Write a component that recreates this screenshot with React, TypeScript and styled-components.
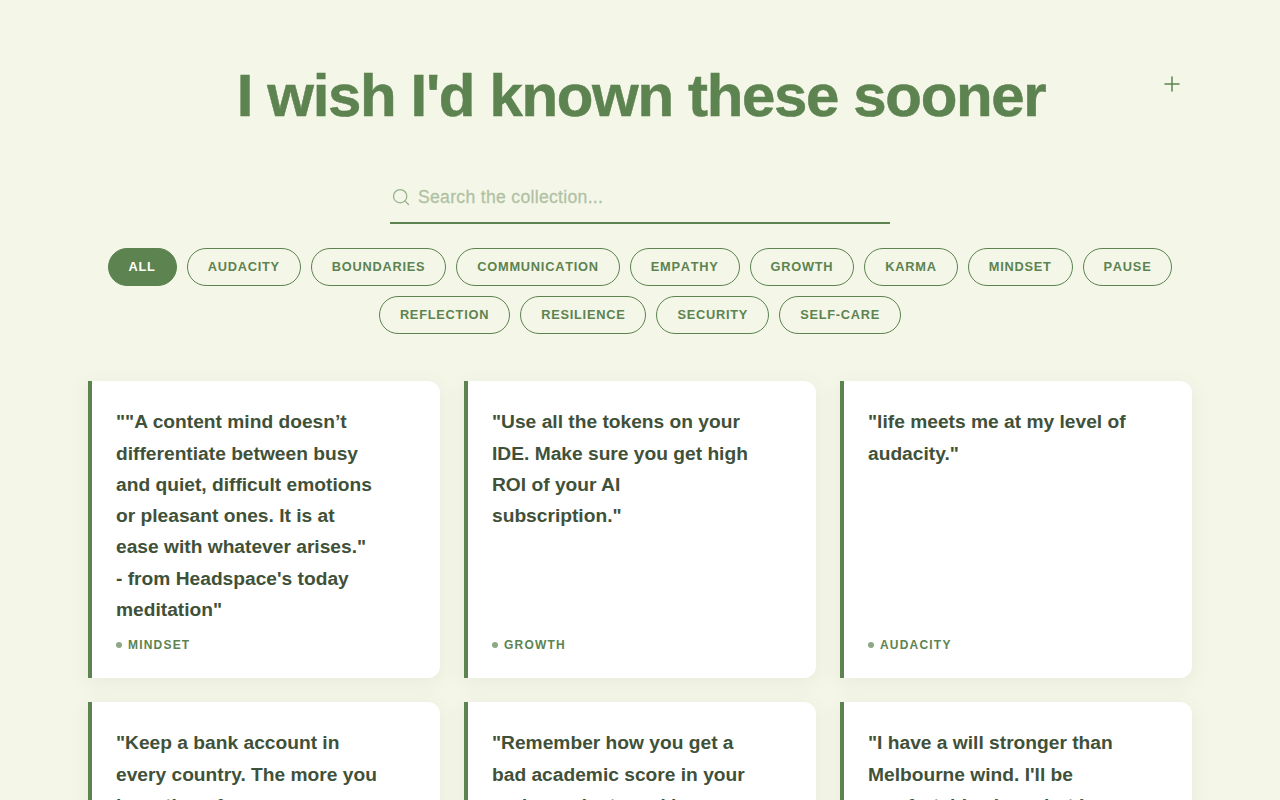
import React from 'react';
import styled, { createGlobalStyle } from 'styled-components';
import { Plus, Search } from 'lucide-react';

const GlobalStyle = createGlobalStyle`
  html, body {
    margin: 0;
    height: 100%;
    overflow: hidden;
    background: #f4f6e8;
  }

  body {
    font-family: "Liberation Sans", Arial, sans-serif;
    -webkit-font-smoothing: antialiased;
  }
`;

const Page = styled.main`
  position: relative;
  max-width: 1104px;
  margin: 0 auto;
  padding: 60px 0 0;
`;

const Title = styled.h1`
  margin: 0;
  padding-left: 2px;
  font-size: 60px;
  line-height: 72px;
  font-weight: 700;
  letter-spacing: -1.35px;
  text-align: center;
  color: #5c8350;
  -webkit-text-stroke: 0.5px #5c8350;
`;

const AddButton = styled.button`
  position: absolute;
  top: 72px;
  right: 8px;
  width: 24px;
  height: 24px;
  padding: 0;
  display: flex;
  align-items: center;
  justify-content: center;
  border: 0;
  background: none;
  color: #5c8350;
`;

const SearchBar = styled.label`
  width: 500px;
  height: 52px;
  margin: 40px auto 24px;
  padding-left: 1px;
  box-sizing: border-box;
  display: flex;
  align-items: center;
  gap: 7px;
  border-bottom: 2px solid #5c8350;
  color: #5c8350;

  svg {
    opacity: 0.6;
  }
`;

const SearchInput = styled.input`
  flex: 1;
  border: 0;
  padding: 0;
  outline: none;
  background: none;
  font: inherit;
  font-size: 17.6px;
  letter-spacing: 0.3px;
  color: #5c8350;

  &::placeholder {
    color: #5c8350;
    opacity: 0.45;
    -webkit-text-stroke: 0.3px #5c8350;
  }
`;

const Filters = styled.div`
  display: flex;
  flex-wrap: wrap;
  justify-content: center;
  gap: 10px;
`;

const Chip = styled.button<{ $active?: boolean }>`
  height: 38px;
  padding: 0 20px 2px;
  border: 1px solid #5c8350;
  border-radius: 19px;
  background: ${p => (p.$active ? '#5c8350' : 'transparent')};
  color: ${p => (p.$active ? '#ffffff' : '#5c8350')};
  font: inherit;
  font-size: 12.8px;
  font-weight: 700;
  font-kerning: none;
  letter-spacing: 0.75px;
`;

const Grid = styled.section`
  display: grid;
  grid-template-columns: repeat(3, 352px);
  gap: 24px;
  margin-top: 47px;
`;

const Card = styled.article`
  min-height: 297px;
  box-sizing: border-box;
  padding: 25.3px 24px 24px;
  display: flex;
  flex-direction: column;
  justify-content: space-between;
  gap: 7px;
  background: #ffffff;
  border-left: 4px solid #5c8350;
  border-radius: 0 12px 12px 0;
  box-shadow: 0 4px 20px rgba(92, 131, 80, 0.08);
`;

const Quote = styled.p`
  margin: 0;
  max-width: 262px;
  font-size: 19.2px;
  line-height: 31.25px;
  font-weight: 700;
  color: #3f5139;
  white-space: pre-line;
`;

const Tag = styled.div`
  display: flex;
  align-items: center;
  gap: 6px;
  font-size: 12px;
  line-height: 18px;
  font-weight: 700;
  letter-spacing: 1.2px;
  color: #5c8350;

  &::before {
    content: '';
    width: 6px;
    height: 6px;
    border-radius: 50%;
    background: #5c8350;
    opacity: 0.7;
  }
`;

const filters = [
  'ALL',
  'AUDACITY',
  'BOUNDARIES',
  'COMMUNICATION',
  'EMPATHY',
  'GROWTH',
  'KARMA',
  'MINDSET',
  'PAUSE',
  'REFLECTION',
  'RESILIENCE',
  'SECURITY',
  'SELF-CARE',
];

const quotes = [
  {
    text: '""A content mind doesn’t differentiate between busy and quiet, difficult emotions or pleasant ones. It is at ease with whatever arises."\n- from Headspace\'s today meditation"',
    tag: 'MINDSET',
  },
  {
    text: '"Use all the tokens on your IDE. Make sure you get high ROI of your AI subscription."',
    tag: 'GROWTH',
  },
  { text: '"life meets me at my level of audacity."', tag: 'AUDACITY' },
  {
    text: '"Keep a bank account in every country. The more you keep them from\nanyone, the safer you are."',
    tag: 'SECURITY',
  },
  {
    text: '"Remember how you get a bad academic score in your undergraduate and keep going anyway."',
    tag: 'RESILIENCE',
  },
  {
    text: '"I have a will stronger than Melbourne wind. I\'ll be comfortable alone, but I won\'t stop."',
    tag: 'RESILIENCE',
  },
];

export default function App() {
  return (
    <Page>
      <GlobalStyle />
      <Title>I wish I'd known these sooner</Title>
      <AddButton aria-label="Add">
        <Plus size={24} strokeWidth={1.5} />
      </AddButton>
      <SearchBar>
        <Search size={20} strokeWidth={1.5} />
        <SearchInput placeholder="Search the collection..." />
      </SearchBar>
      <Filters>
        {filters.map(name => (
          <Chip key={name} $active={name === 'ALL'}>
            {name}
          </Chip>
        ))}
      </Filters>
      <Grid>
        {quotes.map(quote => (
          <Card key={quote.text}>
            <Quote>{quote.text}</Quote>
            <Tag>{quote.tag}</Tag>
          </Card>
        ))}
      </Grid>
    </Page>
  );
}
